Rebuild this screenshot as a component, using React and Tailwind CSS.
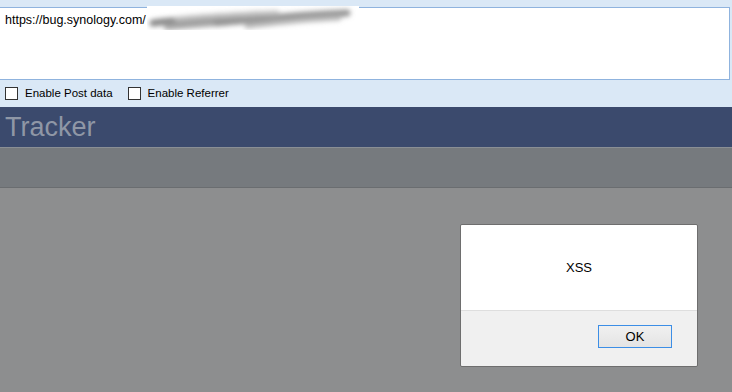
import React from 'react';

const Smudge = () => (
  <svg width="212" height="24" viewBox="0 0 212 24" className="block">
    <defs>
      <filter id="blur" x="-20%" y="-100%" width="140%" height="300%">
        <feGaussianBlur stdDeviation="2.6" />
      </filter>
    </defs>
    <rect width="212" height="24" fill="#fff" />
    <g filter="url(#blur)" strokeLinecap="round" fill="none">
      <path d="M6 17 C40 13 70 11 110 9" stroke="#8a8a8a" strokeWidth="7" />
      <path d="M20 21 C60 18 100 15 150 11" stroke="#a6a6a6" strokeWidth="6" />
      <path d="M70 17 C110 13 150 9 200 7" stroke="#959595" strokeWidth="7" />
      <path d="M100 20 C130 17 160 13 192 12" stroke="#b8b8b8" strokeWidth="5" />
      <path d="M30 13 C60 10 90 8 130 7" stroke="#c0c0c0" strokeWidth="5" />
    </g>
  </svg>
);

const Checkbox = ({ label }) => (
  <label className="flex items-center gap-[7px]">
    <span className="w-[13px] h-[13px] border border-[#333] bg-white" />
    <span>{label}</span>
  </label>
);

export default function App() {
  return (
    <div className="w-[732px] h-[392px] overflow-hidden flex flex-col bg-[#8d8e8f]" style={{ fontFamily: '"Liberation Sans", Arial, sans-serif' }}>
      <div className="bg-[#dae8f6] pt-[7px]">
        <div className="relative h-[73px] mr-[2px] bg-white border border-[#8fb3de] border-l-0">
          <div className="pl-[5px] pt-[4px] text-[12.5px] text-black leading-[16px]">https://bug.synology.com/</div>
          <div className="absolute left-[147px] top-[-2px]">
            <Smudge />
          </div>
        </div>
        <div className="h-[27px] flex items-center gap-[15px] pl-[5px] text-[11.5px] text-black">
          <Checkbox label="Enable Post data" />
          <Checkbox label="Enable Referrer" />
        </div>
      </div>
      <div className="h-[41px] bg-[#3b4a6d] flex items-center pl-[5px] border-b border-[#8a8f95]">
        <span className="text-[27px] text-[#8f97a6] leading-none">Tracker</span>
      </div>
      <div className="h-[40px] bg-[#767a7e] border-b border-[#6a6d70]" />
      <div className="flex-1 pt-[36px] pl-[460px]">
        <div className="w-[238px] h-[143px] border border-[#6e6e6e] rounded-[2px] flex flex-col overflow-hidden">
          <div className="h-[86px] bg-white border-b border-[#dedede] flex items-center justify-center text-[13px] text-black">XSS</div>
          <div className="flex-1 bg-[#f0f0f0] flex justify-end pr-[25px] pt-[14px]">
            <button className="w-[74px] h-[23px] border border-[#3c8ee6] bg-gradient-to-b from-[#f0f0f0] to-[#e4e4e4] text-[13px] text-black">OK</button>
          </div>
        </div>
      </div>
    </div>
  );
}
